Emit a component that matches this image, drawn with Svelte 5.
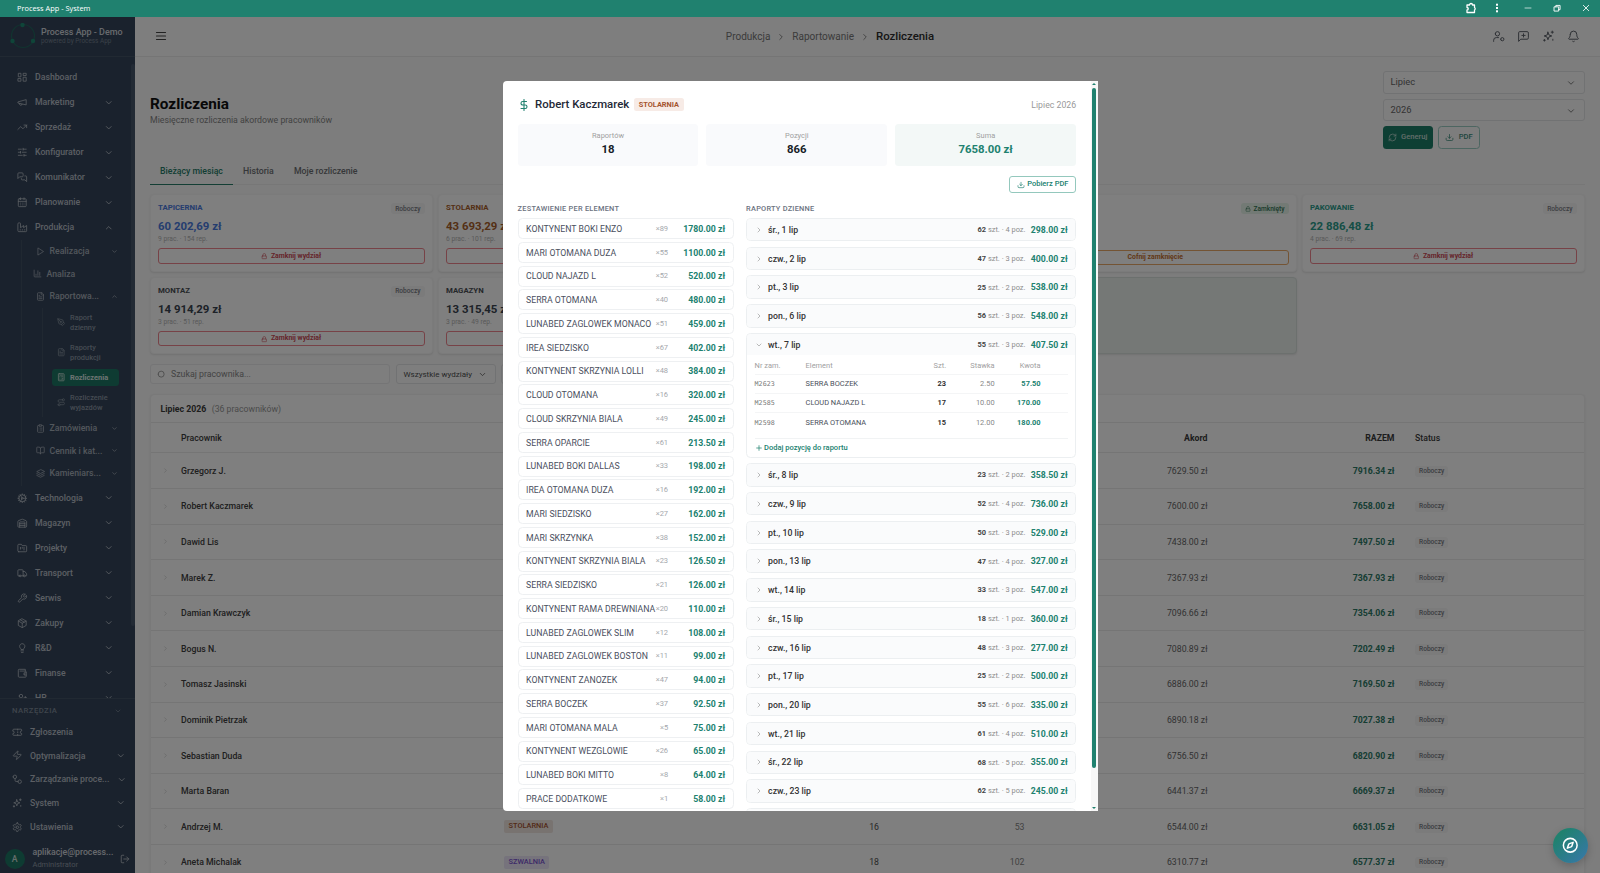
<script>
  const c = (x, y, r) => `M${x - r} ${y}a${r} ${r} 0 1 0 ${2 * r} 0a${r} ${r} 0 1 0 ${-2 * r} 0`;
  const icons = {
    dash: 'M4 3h5v8H3V4zM15 3h6v5h-6zM15 12h6v9h-6zM3 15h6v6H3z',
    mega: 'm3 11 18-5v12L3 14zM11.6 16.8a3 3 0 1 1-5.800-1.600',
    trend: 'M16 7h6v6M22 7l-8.500 8.500-5-5L2 17',
    sliders: 'M10 5H3M12 19H3M14 3v4M16 17v4M21 12h-9M21 19h-5M21 5h-7M8 10v4M8 12H3',
    chat: 'M14 9a2 2 0 0 1-2 2H6l-4 4V4a2 2 0 0 1 2-2h8a2 2 0 0 1 2 2zM18 9h2a2 2 0 0 1 2 2v11l-4-4h-6a2 2 0 0 1-2-2v-1',
    cal: 'M8 2v4M16 2v4M5 4h14a2 2 0 0 1 2 2v14a2 2 0 0 1-2 2H5a2 2 0 0 1-2-2V6a2 2 0 0 1 2-2zM3 10h18M8 14h.01M12 14h.01M16 14h.01M8 18h.01M12 18h.01M16 18h.01',
    factory: 'M2 20a2 2 0 0 0 2 2h16a2 2 0 0 0 2-2V8l-7 5V8l-7 5V4a2 2 0 0 0-2-2H4a2 2 0 0 0-2 2zM17 18h1M12 18h1M7 18h1',
    play: 'M6 3l14 9-14 9z',
    chart: 'M3 3v16a2 2 0 0 0 2 2h16M18 17V9M13 17V5M8 17v-3',
    file: 'M15 2H6a2 2 0 0 0-2 2v16a2 2 0 0 0 2 2h12a2 2 0 0 0 2-2V7zM14 2v4a2 2 0 0 0 2 2h4M16 13H8M16 17H8M10 9H8',
    pen: 'M15.700 21.300a1 1 0 0 1-1.400 0l-1.600-1.600a1 1 0 0 1 0-1.400l5.600-5.600a1 1 0 0 1 1.400 0l1.600 1.600a1 1 0 0 1 0 1.400zM18 13l-1.400-6.900a1 1 0 0 0-.700-.800L3.200 2a1 1 0 0 0-1.200 1.200l3.400 12.700a1 1 0 0 0 .800.700L13 18M2.300 2.300l7.300 7.300' + c(11, 11, 2),
    calc: 'M6 2h12a2 2 0 0 1 2 2v16a2 2 0 0 1-2 2H6a2 2 0 0 1-2-2V4a2 2 0 0 1 2-2zM8 6h8M16 14v4M16 10h.01M12 10h.01M8 10h.01M12 14h.01M8 14h.01M12 18h.01M8 18h.01',
    route: c(6, 19, 3) + c(18, 5, 3) + 'M9 19h8.500a3.500 3.500 0 0 0 0-7h-11a3.500 3.500 0 0 1 0-7H15',
    clip: 'M9 2h6v4H9zM16 4h2a2 2 0 0 1 2 2v14a2 2 0 0 1-2 2H6a2 2 0 0 1-2-2V6a2 2 0 0 1 2-2h2M12 11h4M12 16h4M8 11h.01M8 16h.01',
    book: 'M12 7v14M3 18a1 1 0 0 1-1-1V4a1 1 0 0 1 1-1h5a4 4 0 0 1 4 4 4 4 0 0 1 4-4h5a1 1 0 0 1 1 1v13a1 1 0 0 1-1 1h-6a3 3 0 0 0-3 3 3 3 0 0 0-3-3z',
    layers: 'M12 2 2 7l10 5 10-5zM2 12l10 5 10-5M2 17l10 5 10-5',
    cog: c(12, 12, 8) + c(12, 12, 2) + 'M12 2v2M12 22v-2M17 20.700l-1-1.700M11 10.300 7 3.300M20.700 17l-1.700-1M3.300 7 5 8M14 12h8M2 12h2M20.700 7 19 8M3.300 17 5 16M17 3.300 16 5M11 13.700l-4 7',
    house: 'M18 21V10a1 1 0 0 0-1-1H7a1 1 0 0 0-1 1v11M22 19a2 2 0 0 1-2 2H4a2 2 0 0 1-2-2V8a2 2 0 0 1 1.100-1.800l8-3.200a2 2 0 0 1 1.800 0l8 3.200A2 2 0 0 1 22 8zM6 13h12M6 17h12',
    folder: 'M4 20h16a2 2 0 0 0 2-2V8a2 2 0 0 0-2-2h-8L10 3H4a2 2 0 0 0-2 2v13c0 1 1 2 2 2zM8 10v4M12 10v2M16 10v6',
    truck: 'M14 18V6a2 2 0 0 0-2-2H4a2 2 0 0 0-2 2v11a1 1 0 0 0 1 1h2M15 18H9M19 18h2a1 1 0 0 0 1-1v-3.600L18 8h-4' + c(17, 18, 2) + c(7, 18, 2),
    wrench: 'M14.700 6.300a1 1 0 0 0 0 1.400l1.600 1.600a1 1 0 0 0 1.400 0l3.770-3.770a6 6 0 0 1-7.940 7.940l-6.910 6.910a2.120 2.120 0 0 1-3-3l6.910-6.910a6 6 0 0 1 7.940-7.940z',
    box: 'M12 2l9 5v10l-9 5-9-5V7zM3.300 7 12 12l8.700-5M12 22V12M7.500 4.300l9 5.100',
    bulb: 'M15 14c.200-1 .700-1.700 1.500-2.500A6 6 0 1 0 6 8c0 1 .200 2.200 1.500 3.500.700.700 1.300 1.500 1.500 2.500zM9 18h6M10 22h4',
    wallet: 'M17 14h.01M7 7h12a2 2 0 0 1 2 2v10a2 2 0 0 1-2 2H5a2 2 0 0 1-2-2V5a2 2 0 0 1 2-2h14v4M21 11h-5v5h5',
    users: c(9, 7, 4) + 'M2 21v-2a4 4 0 0 1 4-4h6a4 4 0 0 1 4 4v2M19 8v6M22 11h-6',
    ticket: 'M2 9a3 3 0 0 1 0 6v2a2 2 0 0 0 2 2h16a2 2 0 0 0 2-2v-2a3 3 0 0 1 0-6V7a2 2 0 0 0-2-2H4a2 2 0 0 0-2 2zM13 5v2M13 17v2M13 11v2',
    zap: 'M4 14a1 1 0 0 1-.780-1.630l9.900-10.200a.5.5 0 0 1 .860.460l-1.920 6.020A1 1 0 0 0 13 10h7a1 1 0 0 1 .780 1.630l-9.900 10.200a.5.5 0 0 1-.860-.460l1.920-6.020A1 1 0 0 0 11 14z',
    flow: c(6.5, 6.5, 4) + c(17.5, 17.5, 4) + 'M7 11v4a2 2 0 0 0 2 2h4',
    spark: 'M11 4l1.800 5.200L18 11l-5.200 1.800L11 18l-1.800-5.200L4 11l5.200-1.800zM19 2v4M21 4h-4M20 17v2M3 19h3M4.500 17.500v3',
    gear: 'M12.200 2h-.4a2 2 0 0 0-2 2v.2a2 2 0 0 1-1 1.700l-.4.3a2 2 0 0 1-2 0l-.2-.1a2 2 0 0 0-2.700.7l-.2.4a2 2 0 0 0 .7 2.700l.2.1a2 2 0 0 1 1 1.700v.5a2 2 0 0 1-1 1.700l-.2.1a2 2 0 0 0-.7 2.700l.2.4a2 2 0 0 0 2.700.7l.2-.1a2 2 0 0 1 2 0l.4.3a2 2 0 0 1 1 1.700v.2a2 2 0 0 0 2 2h.4a2 2 0 0 0 2-2v-.2a2 2 0 0 1 1-1.700l.4-.3a2 2 0 0 1 2 0l.2.1a2 2 0 0 0 2.700-.7l.2-.4a2 2 0 0 0-.7-2.700l-.2-.1a2 2 0 0 1-1-1.700v-.5a2 2 0 0 1 1-1.700l.2-.1a2 2 0 0 0 .7-2.700l-.2-.4a2 2 0 0 0-2.700-.7l-.2.1a2 2 0 0 1-2 0l-.4-.3a2 2 0 0 1-1-1.700V4a2 2 0 0 0-2-2z' + c(12, 12, 3),
    logout: 'M9 21H5a2 2 0 0 1-2-2V5a2 2 0 0 1 2-2h4M16 17l5-5-5-5M21 12H9',
    down: 'm6 9 6 6 6-6',
    up: 'm18 15-6-6-6 6',
    right: 'm9 18 6-6-6-6',
    menu: 'M3 5h18M3 12h18M3 19h18',
    usercog: c(10, 7, 4) + 'M3 21v-2a5 5 0 0 1 5-5h4' + c(19, 17, 3),
    msg: 'M21 15a2 2 0 0 1-2 2H7l-4 4V5a2 2 0 0 1 2-2h14a2 2 0 0 1 2 2zM12 7v6M9 10h6',
    bell: 'M6 8a6 6 0 0 1 12 0c0 4.500 1.400 6 2.700 7.300a1 1 0 0 1-.7 1.700H4a1 1 0 0 1-.7-1.700C4.600 14 6 12.500 6 8M10.300 21a2 2 0 0 0 3.400 0',
    refresh: 'M3 12a9 9 0 0 1 9-9 9.750 9.750 0 0 1 6.740 2.740L21 8M21 3v5h-5M21 12a9 9 0 0 1-9 9 9.750 9.750 0 0 1-6.740-2.740L3 16M8 16H3v5',
    download: 'M21 14v3a3 3 0 0 1-3 3H6a3 3 0 0 1-3-3v-3M8 10l4 4 4-4M12 14V4',
    lock: 'M5 11h14a1 1 0 0 1 1 1v8a1 1 0 0 1-1 1H5a1 1 0 0 1-1-1v-8a1 1 0 0 1 1-1zM7 11V7a5 5 0 0 1 10 0v4',
    search: c(11, 11, 8) + 'm21 21-4.300-4.300',
    dollar: 'M12 1v22M17 5H9.500a3.500 3.500 0 0 0 0 7h5a3.500 3.500 0 0 1 0 7H6',
    plus: 'M5 12h14M12 5v14',
    compass: c(12, 12, 10) + 'M16.200 7.800l-1.800 5.300a2 2 0 0 1-1.300 1.300L7.800 16.200l1.800-5.300a2 2 0 0 1 1.300-1.300z',
    puzzle: 'M4 6h5a3 3 0 0 1 6 0h4v5a3 3 0 0 1 0 5v5H4v-5a2.500 2.500 0 0 0 0-5z',
    x: 'M4 4l16 16M20 4 4 20',
    minus: 'M3 12h18',
    restore: 'M4 8h12v12H4zM8 8V4h12v12h-4'
  };

  const top = [['Dashboard', 'dash'], ['Marketing', 'mega', 1], ['Sprzedaż', 'trend', 1], ['Konfigurator', 'sliders', 1], ['Komunikator', 'chat', 1], ['Planowanie', 'cal', 1], ['Produkcja', 'factory', 2]];
  const leaf = [['Raport\ndzienny', 'pen'], ['Raporty\nprodukcji', 'file'], ['Rozliczenia', 'calc', 1], ['Rozliczenie\nwyjazdów', 'route']];
  const rest = [['Technologia', 'cog', 1], ['Magazyn', 'house', 1], ['Projekty', 'folder', 1], ['Transport', 'truck', 1], ['Serwis', 'wrench', 1], ['Zakupy', 'box', 1], ['R&D', 'bulb', 1], ['Finanse', 'wallet', 1], ['HR', 'users', 1]];
  const tools = [['Zgłoszenia', 'ticket'], ['Optymalizacja', 'zap', 1], ['Zarządzanie proce...', 'flow', 1], ['System', 'spark', 1], ['Ustawienia', 'gear', 1]];

  const cards = [
    { n: 'TAPICERNIA', v: '60 202,69 zł', m: '9 prac. · 154 rep.', k: 'blue' },
    { n: 'STOLARNIA', v: '43 693,29 zł', m: '6 prac. · 101 rep.', k: 'brown', part: true },
    { k: 'blank' },
    { k: 'closed' },
    { n: 'PAKOWANIE', v: '22 886,48 zł', m: '4 prac. · 69 rep.', k: 'teal' },
    { n: 'MONTAZ', v: '14 914,29 zł', m: '3 prac. · 51 rep.', k: 'dark' },
    { n: 'MAGAZYN', v: '13 315,45 zł', m: '3 prac. · 49 rep.', k: 'dark', part: true },
    { k: 'blank' },
    { k: 'total' }
  ];

  const people = [
    ['Grzegorz J.', '7629.50', '7916.34'], ['Robert Kaczmarek', '7600.00', '7658.00'], ['Dawid Lis', '7438.00', '7497.50'],
    ['Marek Z.', '7367.93', '7367.93'], ['Damian Krawczyk', '7096.66', '7354.06'], ['Bogus N.', '7080.89', '7202.49'],
    ['Tomasz Jasinski', '6886.00', '7169.50'], ['Dominik Pietrzak', '6890.18', '7027.38'], ['Sebastian Duda', '6756.50', '6820.90'],
    ['Marta Baran', '6441.37', '6669.37'], ['Andrzej M.', '6544.00', '6631.05', 'STOLARNIA', 16, 53], ['Aneta Michalak', '6310.77', '6577.37', 'SZWALNIA', 18, 102]
  ];

  const items = [
    ['KONTYNENT BOKI ENZO', 89, '1780.00'], ['MARI OTOMANA DUZA', 55, '1100.00'], ['CLOUD NAJAZD L', 52, '520.00'], ['SERRA OTOMANA', 40, '480.00'],
    ['LUNABED ZAGLOWEK MONACO', 51, '459.00'], ['IREA SIEDZISKO', 67, '402.00'], ['KONTYNENT SKRZYNIA LOLLI', 48, '384.00'], ['CLOUD OTOMANA', 16, '320.00'],
    ['CLOUD SKRZYNIA BIALA', 49, '245.00'], ['SERRA OPARCIE', 61, '213.50'], ['LUNABED BOKI DALLAS', 33, '198.00'], ['IREA OTOMANA DUZA', 16, '192.00'],
    ['MARI SIEDZISKO', 27, '162.00'], ['MARI SKRZYNKA', 38, '152.00'], ['KONTYNENT SKRZYNIA BIALA', 23, '126.50'], ['SERRA SIEDZISKO', 21, '126.00'],
    ['KONTYNENT RAMA DREWNIANA', 20, '110.00'], ['LUNABED ZAGLOWEK SLIM', 12, '108.00'], ['LUNABED ZAGLOWEK BOSTON', 11, '99.00'], ['KONTYNENT ZANOZEK', 47, '94.00'],
    ['SERRA BOCZEK', 37, '92.50'], ['MARI OTOMANA MALA', 5, '75.00'], ['KONTYNENT WEZGLOWIE', 26, '65.00'], ['LUNABED BOKI MITTO', 8, '64.00'], ['PRACE DODATKOWE', 1, '58.00']
  ];

  const days = [
    ['śr., 1 lip', 62, 4, '298.00'], ['czw., 2 lip', 47, 3, '400.00'], ['pt., 3 lip', 25, 2, '538.00'], ['pon., 6 lip', 56, 3, '548.00'],
    ['wt., 7 lip', 55, 3, '407.50', true], ['śr., 8 lip', 23, 2, '358.50'], ['czw., 9 lip', 52, 4, '736.00'], ['pt., 10 lip', 50, 3, '529.00'],
    ['pon., 13 lip', 47, 4, '327.00'], ['wt., 14 lip', 33, 3, '547.00'], ['śr., 15 lip', 18, 1, '360.00'], ['czw., 16 lip', 48, 3, '277.00'],
    ['pt., 17 lip', 25, 2, '500.00'], ['pon., 20 lip', 55, 6, '335.00'], ['wt., 21 lip', 61, 4, '510.00'], ['śr., 22 lip', 68, 5, '355.00'],
    ['czw., 23 lip', 62, 5, '245.00']
  ];
  const lines = [['M2623', 'SERRA BOCZEK', 23, '2.50', '57.50'], ['M2585', 'CLOUD NAJAZD L', 17, '10.00', '170.00'], ['M2598', 'SERRA OTOMANA', 15, '12.00', '180.00']];
</script>

{#snippet icon(name, size, w = 2)}
  <svg class="ic" width={size} height={size} viewBox="0 0 24 24" stroke-width={w}><path d={icons[name]} /></svg>
{/snippet}

{#snippet navItem(it)}
  <div class="nav">
    {@render icon(it[1], 10.5, 1.8)}
    <span>{it[0]}</span>
    {#if it[2]}{@render icon(it[2] === 2 ? 'up' : 'down', 9.5, 2.2)}{/if}
  </div>
{/snippet}

{#snippet subItem(label, name, state)}
  <div class="sub" class:flat={!state}>
    {@render icon(name, 9)}
    <span>{label}</span>
    {#if state}{@render icon(state, 7, 2.4)}{/if}
  </div>
{/snippet}

<div class="window">
  <header class="titlebar">
    <span class="apptitle">Process App - System</span>
    {@render icon('puzzle', 12, 2.6)}
    <b class="dots"></b>
    {@render icon('minus', 8, 2)}
    {@render icon('restore', 8.5, 2.6)}
    {@render icon('x', 8, 2.6)}
  </header>

  <div class="body">
    <aside>
      <div class="brand">
        <svg width="26" height="26" viewBox="0 0 26 26"><circle cx="13" cy="13" r="11.500" fill="none" stroke="#23665f" stroke-width="1.200" /><g fill="#1e8a72"><circle cx="12.500" cy="2" r="2.200" /><circle cx="2.500" cy="18" r="2.200" /><circle cx="23" cy="18" r="2.200" /></g></svg>
        <div><strong>Process App - Demo</strong><small>powered by Process App</small></div>
      </div>
      <nav>
        {#each top as it}{@render navItem(it)}{/each}
        <div class="tree">
          {@render subItem('Realizacja', 'play', 'down')}
          {@render subItem('Analiza', 'chart')}
          {@render subItem('Raportowa...', 'file', 'up')}
          <div class="leaves">
            {#each leaf as l}
              <div class="leaf" class:active={l[2]}>{@render icon(l[1], 8.5)}<span>{l[0]}</span></div>
            {/each}
          </div>
          {@render subItem('Zamówienia', 'clip', 'down')}
          {@render subItem('Cennik i kat...', 'book', 'down')}
          {@render subItem('Kamieniars...', 'layers', 'down')}
        </div>
        {#each rest as it}{@render navItem(it)}{/each}
        <div class="navthumb"></div>
      </nav>
      <div class="tools">
        <div class="toolhead"><span>NARZĘDZIA</span>{@render icon('down', 8)}</div>
        {#each tools as t}
          <div class="tool">{@render icon(t[1], 10.5, 1.8)}<span>{t[0]}</span>{#if t[2]}{@render icon('down', 9.5, 2.2)}{/if}</div>
        {/each}
      </div>
      <div class="user">
        <div class="avatar">A</div>
        <div class="who"><strong>aplikacje@process...</strong><small>Administrator</small></div>
        {@render icon('logout', 10)}
      </div>
    </aside>

    <main>
      <div class="topbar">
        {@render icon('menu', 12, 2.4)}
        <div class="crumbs"><span>Produkcja</span>{@render icon('right', 10)}<span>Raportowanie</span>{@render icon('right', 10)}<strong>Rozliczenia</strong></div>
        <div class="acts">{@render icon('usercog', 13, 1.8)}{@render icon('msg', 13, 1.8)}{@render icon('spark', 13, 1.8)}{@render icon('bell', 13, 1.8)}</div>
      </div>

      <div class="content">
        <div class="pagehead">
          <div class="heading"><h1>Rozliczenia</h1><p>Miesięczne rozliczenia akordowe pracowników</p></div>
          <div class="filters">
            <div class="select">Lipiec{@render icon('down', 10)}</div>
            <div class="select">2026{@render icon('down', 10)}</div>
            <div class="btns">
              <div class="btn solid">{@render icon('refresh', 9)}Generuj</div>
              <div class="btn line">{@render icon('download', 9)}PDF</div>
            </div>
          </div>
        </div>
        <div class="tabs"><span class="on">Bieżący miesiąc</span><span>Historia</span><span>Moje rozliczenie</span></div>

        <div class="cards">
          {#each cards as k}
            <div class="card {k.k}">
              {#if k.n}
                <div class="chead"><strong>{k.n}</strong>{#if !k.part}<em class="badge">Roboczy</em>{/if}</div>
                <div class="cval">{k.v}</div>
                <div class="meta">{k.m}</div>
                <div class="close">{#if !k.part}{@render icon('lock', 6.5)}Zamknij wydział{/if}</div>
              {:else if k.k === 'closed'}
                <div class="chead"><strong></strong><em class="badge shut">{@render icon('lock', 6)}Zamknięty</em></div>
                <div class="close undo">Cofnij zamknięcie</div>
              {/if}
            </div>
          {/each}
        </div>

        <div class="searchbar">
          <div class="search">{@render icon('search', 9)}Szukaj pracownika...</div>
          <div class="select dept">Wszystkie wydziały{@render icon('down', 9)}</div>
          <div class="select dept"></div>
        </div>

        <div class="table">
          <div class="caption"><strong>Lipiec 2026</strong><span>(36 pracowników)</span></div>
          <div class="tr th"><span></span><span>Pracownik</span><span></span><span></span><span class="r">Akord</span><span class="r">RAZEM</span><span class="st">Status</span></div>
          {#each people as p}
            <div class="tr">
              <span class="chev">{@render icon('right', 7)}</span>
              <span class="name">{p[0]}</span>
              <span class="mix">{#if p[3]}<em class="tag" class:violet={p[3] === 'SZWALNIA'}>{p[3]}</em><b>{p[4]}</b>{/if}</span>
              <span class="r grey">{p[5] ?? ''}</span>
              <span class="r">{p[1]} zł</span>
              <span class="r sum">{p[2]} zł</span>
              <span class="st"><em class="badge">Roboczy</em></span>
            </div>
          {/each}
        </div>
      </div>
    </main>
  </div>
</div>

<div class="overlay"></div>

<section class="modal">
  <div class="scroll">
    <div class="mhead">
      {@render icon('dollar', 12, 2.2)}
      <strong>Robert Kaczmarek</strong><em>STOLARNIA</em>
      <span>Lipiec 2026</span>
    </div>
    <div class="stats">
      <div><small>Raportów</small><b>18</b></div>
      <div><small>Pozycji</small><b>866</b></div>
      <div class="green"><small>Suma</small><b>7658.00 zł</b></div>
    </div>
    <div class="pdfrow"><div class="pdf">{@render icon('download', 8)}Pobierz PDF</div></div>
    <div class="cols">
      <div class="left">
        <h3>ZESTAWIENIE PER ELEMENT</h3>
        {#each items as i}
          <div class="item"><span>{i[0]}</span><small>×{i[1]}</small><b>{i[2]} zł</b></div>
        {/each}
      </div>
      <div class="right">
        <h3>RAPORTY DZIENNE</h3>
        {#each days as d}
          <div class="day">
            <div class="dhead">
              {@render icon(d[4] ? 'down' : 'right', 8)}
              <strong>{d[0]}</strong>
              <small><b>{d[1]}</b> szt. · {d[2]} poz.</small>
              <b class="amt">{d[3]} zł</b>
            </div>
            {#if d[4]}
              <div class="detail">
                <div class="dr dh"><span>Nr zam.</span><span>Element</span><span>Szt.</span><span>Stawka</span><span>Kwota</span></div>
                {#each lines as l}
                  <div class="dr"><span class="mono">{l[0]}</span><span>{l[1]}</span><span class="q">{l[2]}</span><span class="rate">{l[3]}</span><span class="k">{l[4]}</span></div>
                {/each}
                <div class="add">{@render icon('plus', 8, 2.2)}Dodaj pozycję do raportu</div>
              </div>
            {/if}
          </div>
        {/each}
        <div class="day"><div class="dhead"></div></div>
      </div>
    </div>
  </div>
  <div class="bar"><i class="tri"></i><div class="thumb"></div><i class="tri dn"></i></div>
</section>

<div class="fab">{@render icon('compass', 16.5, 2.2)}</div>

<style>
  :global(body) { margin: 0; overflow: hidden; background: #7c7c7c; }
  :global(*) { box-sizing: border-box; }
  .window, .modal, .fab { font-family: Roboto, "Liberation Sans", sans-serif; font-size: 8.73px; line-height: 1.15; }
  em, i { font-style: normal; }
  .ic { fill: none; stroke: currentColor; stroke-linecap: round; stroke-linejoin: round; flex: none; display: block; }
  .window { width: 1600px; height: 873px; display: flex; flex-direction: column; overflow: hidden; white-space: nowrap; }
  .titlebar { height: 16.5px; flex: none; background: #20816f; color: #fff; display: flex; align-items: center; padding: 0 10.500px 0 17px; position: relative; z-index: 3; }
  .titlebar > :global(svg) { margin-left: 20.5px; }
  .apptitle { font: 7.4px "Open Sans", "Noto Sans", sans-serif; flex: 1; }
  .dots { width: 2px; height: 2px; background: #fff; box-shadow: 0 -3.300px #fff, 0 3.300px #fff; margin: 0 6px 0 18.500px; }
  .body { flex: 1; min-height: 0; display: flex; }

  aside { width: 135px; flex: none; background: #35455a; color: #b8bfc8; display: flex; flex-direction: column; overflow: hidden; }
  .brand { height: 40.500px; flex: none; border-bottom: 1px solid #435265; display: flex; align-items: center; padding-left: 9.5px; gap: 5.5px; }
  .brand strong { display: block; font-size: 8.950px; font-weight: 500; color: #d0d4da; }
  .brand small { display: block; font-size: 6.4px; color: #768292; line-height: 8px; }
  nav { flex: 1; min-height: 0; overflow: hidden; padding-top: 8px; position: relative; }
  .nav { height: 25px; display: flex; align-items: center; padding: 0 22px 0 17px; gap: 7.500px; font-weight: 500; }
  .nav span { flex: 1; }
  .tree { margin-left: 20.5px; border-left: 1px solid #405063; height: 245.500px; }
  .sub { height: 22.5px; display: flex; align-items: center; padding: 0 17.500px 0 14px; gap: 5px; font-weight: 500; color: #a5aeb9; }
  .sub.flat { padding-left: 11px; }
  .sub span { margin-right: auto; }
  .leaves { margin-left: 20px; border-left: 1px solid #405063; height: 109.500px; padding: 0 15px 0 9px; }
  .leaf { height: 30px; display: flex; align-items: center; gap: 5px; padding-left: 5px; font-size: 7.4px; font-weight: 500; line-height: 10px; color: #8b97a5; white-space: pre; width: 67.500px; }
  .leaf.active { height: 17px; margin: 1.500px 0; background: #1d7764; color: #dce8e4; font-weight: 700; border-radius: 3.500px; }
  .navthumb { position: absolute; right: .5px; top: 7px; width: 4px; height: 562px; border-radius: 2px; background: #445468; }
  .tools { flex: none; border-top: 1px solid #435265; padding: 3.500px 10px 0 12px; height: 141px; }
  .toolhead { height: 18px; display: flex; align-items: center; justify-content: space-between; font-size: 7.7px; letter-spacing: .450px; font-weight: 500; color: #7d8998; padding-right: 3px; }
  .tool { height: 23.75px; display: flex; align-items: center; gap: 7.500px; font-weight: 500; }
  .tool span { margin-right: auto; }
  .user { height: 34.500px; flex: none; display: flex; align-items: center; padding: 6px 5px 0 4.5px; }
  .avatar { width: 20.5px; height: 20.5px; border-radius: 50%; background: #1d7764; color: #ccddd8; display: grid; place-items: center; font-weight: 500; flex: none; }
  .who { width: 82px; margin: 0 5px 0 7.500px; }
  .who strong, .who small { display: block; line-height: 11.500px; }
  .who strong { font-weight: 500; color: #d0d4da; }
  .who small { font-size: 7.5px; color: #8f9aa8; }

  main { flex: 1; min-width: 0; background: #fafafa; display: flex; flex-direction: column; }
  .topbar { height: 40.5px; flex: none; background: #fcfcfc; border-bottom: 1px solid #ebebeb; display: flex; align-items: center; padding: 0 20px; color: #444; justify-content: space-between; position: relative; }
  .crumbs { position: absolute; left: 0; display: flex; align-items: center; justify-content: center; gap: 6px; font-size: 10px; color: #777; padding: 1px 75px 0 0; width: 1465px; }
  .crumbs strong { font-size: 11.400px; font-weight: 500; color: #2c2c2c; }
  .acts { display: flex; gap: 12px; color: #5a6068; }
  .content { padding: 14px 15.500px 0 15px; }
  .pagehead { display: flex; justify-content: space-between; }
  .heading { padding-top: 23.800px; }
  h1 { margin: 0; font-size: 15.33px; line-height: 18px; font-weight: 700; color: #111; }
  p { margin: 0; line-height: 14px; font-size: 8.750px; color: #858585; }
  .filters { width: 202px; display: flex; flex-direction: column; gap: 5px; }
  .select { height: 22.7px; border: 1px solid #e3e4e6; border-radius: 3px; background: #fdfdfd; display: flex; align-items: center; justify-content: space-between; padding: 1px 8px 0 7px; font-size: 9.33px; color: #666; }
  .btns { display: flex; gap: 5px; }
  .btn { height: 22.500px; border-radius: 3.500px; display: flex; align-items: center; justify-content: center; font-size: 7.6px; font-weight: 500; }
  .solid { width: 50.500px; gap: 4px; background: #1c7e69; color: #c4dcd4; }
  .line { width: 41.500px; gap: 5px; border: 1px solid #9accc2; color: #3a8c7b; }
  .tabs { margin-top: 9.500px; display: flex; height: 27px; border-bottom: 1px solid #efefef; color: #6c6f73; font-weight: 500; }
  .tabs span { padding: 7.800px 10.200px 0 10px; height: 27px; }
  .tabs .on { color: #267c68; border-bottom: 1.5px solid #267c68; }
  .cards { margin-top: 9px; display: grid; grid-template-columns: repeat(5, 1fr); gap: 5.5px; }
  .card { height: 77.300px; border: 1px solid #f6f6f6; border-radius: 4px; background: #fefefe; box-shadow: 0 1px 2px #00000018; padding: 8.500px 7px 0; }
  .chead { display: flex; justify-content: space-between; align-items: center; height: 10px; font-size: 7.8px; }
  .chead strong { font-weight: 700; }
  .badge { font-size: 6.6px; font-weight: 500; background: #f6f6f7; color: #777b82; border-radius: 3px; padding: 1px 4px 0; display: inline-flex; align-items: center; gap: 2px; height: 11px; }
  .badge.shut { background: #e6f4ea; color: #357556; }
  .cval { font-size: 11.400px; font-weight: 700; line-height: 14px; margin-top: 5px; }
  .meta { font-size: 6.7px; line-height: 9px; margin-top: 2px; color: #b4b4b4; }
  .close { height: 15.300px; border: 1px solid #ee858e; border-radius: 3px; margin-top: 4.500px; display: flex; align-items: center; justify-content: center; gap: 3px; font-size: 6.9px; font-weight: 700; color: #cc4a56; padding-top: 1px; }
  .close.undo { margin-top: 36px; border-color: #e8a868; color: #c4702f; }
  .blue .chead strong, .blue .cval { color: #4a7ade; }
  .brown .chead strong, .brown .cval { color: #a8602b; }
  .teal .chead strong, .teal .cval { color: #2a9d8c; }
  .dark .chead strong { color: #4b4f55; }
  .dark .cval { color: #3a4450; }
  .card.total { background: #eaf0ed; border-color: #d9e1dd; }
  .searchbar { display: flex; gap: 5.500px; margin-top: 9.500px; }
  .search { width: 240px; height: 20.500px; border: 1px solid #ebebed; border-radius: 3px; background: #fcfcfc; display: flex; align-items: center; gap: 5px; padding: 0 0 0 6px; color: #888; font-size: 8.8px; }
  .dept { width: 100px; height: 20.500px; font-size: 8px; color: #505050; }
  .table { margin-top: 9.500px; border: 1px solid #f2f2f2; border-radius: 4px; background: #fefefe; box-shadow: 0 1px 2px #00000018; }
  .caption { height: 27.500px; display: flex; align-items: center; padding: 0 0 0 9.500px; gap: 5.5px; color: #979797; }
  .caption strong { color: #3a3a3a; font-weight: 700; }
  .tr { height: 35.600px; border-top: 1px solid #ebebeb; display: grid; grid-template-columns: 30px 323px 375px 145.500px 183px 187px 1fr; align-items: center; color: #666; }
  .th { height: 30px; font-weight: 500; color: #3a3a3a; }
  .th .r { font-weight: 700; }
  .r { text-align: right; }
  .chev { padding-left: 11px; color: #c4c4c4; }
  .name { font-weight: 500; color: #404040; }
  .mix { display: flex; justify-content: space-between; align-items: center; }
  .mix b { font-weight: 400; color: #505050; }
  .grey { color: #858585; }
  .tag { font-size: 7.4px; font-weight: 500; background: #f1e6e0; color: #a5542f; border-radius: 2px; padding: 2.500px 4.500px; }
  .tag.violet { background: #ece7f8; color: #7a54d0; }
  .sum { font-weight: 700; color: #2c7a66; }
  .st { padding-left: 20.500px; }

  .overlay { position: absolute; inset: 16.500px 0 0; background: rgba(0, 0, 0, .5); }
  .modal { position: absolute; left: 502.600px; top: 81px; width: 595px; height: 730px; background: #fff; border-radius: 4px 0 0 4px; overflow: hidden; display: flex; white-space: nowrap; color: #333; }
  .scroll { flex: 1; min-width: 0; padding: 16px 15px 0; overflow: hidden; height: 100%; }
  .mhead { height: 15px; display: flex; align-items: center; color: #20816f; }
  .mhead strong { font-size: 11.400px; font-weight: 500; color: #1f2937; margin: 0 5px 0 5.500px; padding-top: 1px; }
  .mhead em { font-size: 7.400px; font-weight: 700; color: #a5542f; background: #f7ebe6; border-radius: 2.500px; height: 12.500px; padding: 2.500px 4.500px 0; }
  .mhead span { margin-left: auto; color: #999; padding-top: 1px; }
  .stats { display: grid; grid-template-columns: repeat(3, 1fr); gap: 8px; margin-top: 12px; }
  .stats div { height: 41.500px; background: #f9fafc; border-radius: 3.500px; text-align: center; padding-top: 7px; }
  .stats .green { background: #f3f8f7; }
  .stats small { display: block; font-size: 7.45px; line-height: 10px; color: #a0a0a0; }
  .stats b { display: block; font-size: 11.33px; line-height: 17px; color: #161c26; }
  .stats .green b { color: #20816f; }
  .pdfrow { display: flex; justify-content: flex-end; margin-top: 10.500px; }
  .pdf { height: 17px; width: 67px; border: 1px solid #94c8bd; border-radius: 3px; display: flex; align-items: center; justify-content: center; gap: 2.500px; color: #20816f; font-size: 7.5px; font-weight: 500; }
  .cols { display: flex; gap: 12.500px; margin-top: 8.500px; }
  .left { width: 216px; }
  .right { flex: 1; }
  h3 { margin: 0 0 3px; font-size: 7.4px; line-height: 13.500px; font-weight: 500; letter-spacing: .240px; color: #6b7280; }
  .item { height: 21.100px; margin-bottom: 2.670px; border: 1px solid #eef0f2; border-radius: 4.500px; display: flex; align-items: center; padding: .5px 7.500px 0; color: #4b5060; }
  .item span { flex: 1; width: 0; }
  .item small { font-size: 7.5px; color: #a4a7ac; padding-top: 1px; }
  .item b { width: 57px; text-align: right; color: #20816f; }
  .day { border: 1px solid #eceff1; border-radius: 4.500px; margin-bottom: 5.350px; overflow: hidden; }
  .dhead { height: 21.400px; background: #fafbfc; display: flex; align-items: center; padding: .5px 7.500px 0; color: #999; }
  .dhead strong { font-weight: 500; color: #333; flex: 1; margin-left: 5.500px; }
  .dhead small { font-size: 7.45px; color: #8c8c8c; padding-top: 1px; }
  .dhead small b { color: #444; }
  .dhead .amt { color: #20816f; margin-left: 5.300px; }
  .detail { padding: 3.200px 7.500px 0; height: 101.500px; }
  .dr { display: grid; grid-template-columns: 51px 100px 40.500px 48.500px 46px; height: 19.200px; align-items: center; font-size: 7.45px; color: #4a4f5a; border-bottom: 1px solid #f4f5f6; }
  .dr:nth-last-child(2) { border: 0; }
  .dh { height: 16.500px; color: #a0a0a0; }
  .dr span { padding-top: .600px; }
  .dr span:nth-child(n + 3) { text-align: right; }
  .dr .mono { font-family: "DejaVu Sans Mono", monospace; font-size: 6.7px; color: #777; padding-top: 1px; }
  .dr .q { font-weight: 700; color: #333; }
  .dr .rate { color: #888; }
  .dr .k { font-weight: 700; color: #20816f; }
  .add { display: flex; align-items: center; gap: 1.500px; border-top: 1px solid #f1f3f4; margin-top: 5px; height: 20px; padding-top: .500px; font-size: 7.5px; font-weight: 500; color: #20816f; }
  .bar { width: 6.500px; height: 100%; background: #f7f7f7; display: flex; flex-direction: column; align-items: center; padding-top: 2px; flex: none; }
  .tri { border: 2px solid transparent; border-top: 0; border-bottom: 2px solid #20816f; width: 0; margin-bottom: 3px; }
  .tri.dn { transform: scaleY(-1); margin: auto 0 2.500px; }
  .thumb { width: 4px; height: 680px; border-radius: 2px; background: #20816f; }
  .fab { position: absolute; left: 1552.500px; top: 827.500px; width: 35px; height: 35px; border-radius: 50%; background: linear-gradient(135deg, #20816f 20%, #3778a8 95%); color: #fff; display: grid; place-items: center; box-shadow: 0 3px 8px #0003; }
</style>
